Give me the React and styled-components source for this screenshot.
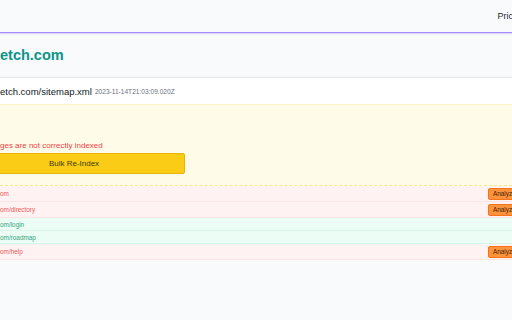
import React from "react";
import styled, { createGlobalStyle } from "styled-components";

const Global = createGlobalStyle`
  html, body { margin: 0; padding: 0; background: #f9fafb; }
  body { font-family: "Liberation Sans", Arial, sans-serif; overflow: hidden; width: 512px; height: 320px; }
  #root { width: 512px; overflow: hidden; }
`;

const Header = styled.header`
  height: 32px;
  display: flex;
  align-items: center;
  justify-content: flex-end;
  background: #f9fafb;
  border-bottom: 1.5px solid #a78bfa;
  box-shadow: 0 1px 1px rgba(167, 139, 250, 0.35);
`;

const NavLink = styled.span`
  font-size: 9px;
  color: #1f2937;
  margin-right: -13px;
  white-space: nowrap;
`;

const TitleBar = styled.div`
  height: 44px;
  display: flex;
  align-items: center;
  border-bottom: 1px solid #e5e7eb;
`;

const Title = styled.h1`
  margin: 0;
  font-size: 14.5px;
  font-weight: 700;
  color: #0d9488;
  white-space: nowrap;
`;

const SitemapRow = styled.div`
  height: 26px;
  display: flex;
  align-items: center;
  gap: 3px;
  background: #ffffff;
  border-bottom: 1px solid #fdf3c4;
  white-space: nowrap;
`;

const SitemapUrl = styled.span`
  font-size: 9.5px;
  color: #111827;
`;

const Stamp = styled.span`
  font-size: 6.6px;
  color: #6b7280;
  padding-top: 1px;
`;

const Notice = styled.section`
  background: #fefce8;
  padding: 36px 0 11px;
  display: flex;
  flex-direction: column;
  align-items: flex-start;
  gap: 3px;
  border-bottom: 1px dashed #fde68a;
`;

const Warning = styled.p`
  margin: 0;
  font-size: 8px;
  color: #ef4444;
  white-space: nowrap;
`;

const BulkButton = styled.button`
  width: 222px;
  height: 21px;
  margin-left: -37px;
  border: 1px solid #eab308;
  border-radius: 2px;
  background: #facc15;
  color: #3f3a14;
  font-family: inherit;
  font-size: 8px;
  padding: 0;
`;

const List = styled.div`
  display: flex;
  flex-direction: column;
`;

const Row = styled.div`
  display: flex;
  align-items: center;
  justify-content: space-between;
  height: ${(p) => (p.$ok ? "12px" : "15px")};
  background: ${(p) => (p.$ok ? "#ecfdf5" : "#fef2f2")};
  border-bottom: 1px solid ${(p) => (p.$ok ? "#d9f5e9" : "#fbe4e4")};
`;

const RowLink = styled.span`
  font-size: 6.4px;
  color: ${(p) => (p.$ok ? "#34a57e" : "#ef5b5b")};
  white-space: nowrap;
`;

const AnalyzeButton = styled.button`
  height: 12px;
  width: 40px;
  margin-right: -16px;
  padding: 0 0 0 4px;
  text-align: left;
  background: #fb923c;
  border: 1px solid #f97316;
  border-radius: 2px;
  color: #4a1d05;
  font-family: inherit;
  font-size: 6.4px;
  white-space: nowrap;
`;

const rows = [
  { path: "om", ok: false },
  { path: "om/directory", ok: false },
  { path: "om/login", ok: true },
  { path: "om/roadmap", ok: true },
  { path: "om/help", ok: false },
];

export default function App() {
  return (
    <>
      <Global />
      <Header>
        <NavLink>Pricing</NavLink>
      </Header>
      <TitleBar>
        <Title>etch.com</Title>
      </TitleBar>
      <SitemapRow>
        <SitemapUrl>etch.com/sitemap.xml</SitemapUrl>
        <Stamp>2023-11-14T21:03:09.020Z</Stamp>
      </SitemapRow>
      <Notice>
        <Warning>ges are not correctly indexed</Warning>
        <BulkButton>Bulk Re-Index</BulkButton>
      </Notice>
      <List>
        {rows.map((r) => (
          <Row key={r.path} $ok={r.ok}>
            <RowLink $ok={r.ok}>{r.path}</RowLink>
            {!r.ok && <AnalyzeButton>Analyze</AnalyzeButton>}
          </Row>
        ))}
      </List>
    </>
  );
}
